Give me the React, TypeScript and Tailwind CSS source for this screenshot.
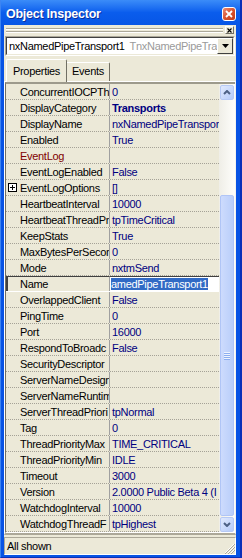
import React from 'react';

// ── Data ──────────────────────────────────────────────────────────────────

type Prop = {
  name: string;
  value?: string;
  kind?: 'bold' | 'event' | 'set' | 'edit';
};

// names are cut the way the grid column shows them
const PROPS: Prop[] = [
  { name: 'ConcurrentIOCPTh', value: '0' },
  { name: 'DisplayCategory', value: 'Transports', kind: 'bold' },
  { name: 'DisplayName', value: 'nxNamedPipeTranspor' },
  { name: 'Enabled', value: 'True' },
  { name: 'EventLog', kind: 'event' },
  { name: 'EventLogEnabled', value: 'False' },
  { name: 'EventLogOptions', value: '[]', kind: 'set' },
  { name: 'HeartbeatInterval', value: '10000' },
  { name: 'HeartbeatThreadPr', value: 'tpTimeCritical' },
  { name: 'KeepStats', value: 'True' },
  { name: 'MaxBytesPerSecor', value: '0' },
  { name: 'Mode', value: 'nxtmSend' },
  { name: 'Name', value: 'amedPipeTransport1', kind: 'edit' },
  { name: 'OverlappedClient', value: 'False' },
  { name: 'PingTime', value: '0' },
  { name: 'Port', value: '16000' },
  { name: 'RespondToBroadc', value: 'False' },
  { name: 'SecurityDescriptor' },
  { name: 'ServerNameDesign' },
  { name: 'ServerNameRuntim' },
  { name: 'ServerThreadPriori', value: 'tpNormal' },
  { name: 'Tag', value: '0' },
  { name: 'ThreadPriorityMax', value: 'TIME_CRITICAL' },
  { name: 'ThreadPriorityMin', value: 'IDLE' },
  { name: 'Timeout', value: '3000' },
  { name: 'Version', value: '2.0000 Public Beta 4 (I' },
  { name: 'WatchdogInterval', value: '10000' },
  { name: 'WatchdogThreadF', value: 'tpHighest' },
];

// ── Bits ──────────────────────────────────────────────────────────────────

function PlusBox() {
  return (
    <svg width="9" height="9" viewBox="0 0 9 9" className="shrink-0 mr-[3px]">
      <rect x="0.5" y="0.5" width="8" height="8" fill="#fff" stroke="#000" />
      <path d="M2 4.5h5M4.5 2v5" stroke="#000" />
    </svg>
  );
}

function PropRow({ p }: { p: Prop }) {
  if (p.kind === 'edit') {
    return (
      <div className="flex h-[16px] border-b border-white">
        <div className="w-[104px] shrink-0 overflow-hidden whitespace-nowrap pl-[12px] leading-[15px] border-t border-l-2 border-[#404040] border-r border-r-[#a0a0a0]">
          {p.name}
        </div>
        <div className="flex-1 overflow-hidden whitespace-nowrap bg-white border-t border-[#404040] pl-[1px] leading-[15px]">
          <span className="bg-[#316ac5] text-white">{p.value}</span>
        </div>
      </div>
    );
  }
  return (
    <div className="flex h-[16px] border-b border-dotted border-[#a5a297]">
      <div
        className={`w-[104px] shrink-0 flex items-center overflow-hidden whitespace-nowrap leading-[16px] border-r border-[#a0a0a0] ${
          p.kind === 'set' ? 'pl-[2px]' : 'pl-[14px]'
        } ${p.kind === 'event' ? 'text-[#800000]' : 'text-black'}`}
      >
        {p.kind === 'set' && <PlusBox />}
        <span>{p.name}</span>
      </div>
      <div
        className={`flex-1 overflow-hidden whitespace-nowrap pl-[2px] leading-[16px] text-[#000080] ${
          p.kind === 'bold' ? 'font-bold' : ''
        }`}
      >
        {p.value}
      </div>
    </div>
  );
}

function ScrollBtn({ dir }: { dir: 'up' | 'down' }) {
  return (
    <div className="h-[15px] w-[14px] ml-[1px] rounded-[2px] border border-[#b6c9f5] bg-gradient-to-br from-[#e1eafe] to-[#b5cbf9] flex items-center justify-center">
      <svg width="8" height="5" viewBox="0 0 8 5">
        <path
          d={dir === 'up' ? 'M1 4L4 1L7 4' : 'M1 1L4 4L7 1'}
          fill="none"
          stroke="#4d6185"
          strokeWidth="2"
        />
      </svg>
    </div>
  );
}

function ScrollBar() {
  return (
    <div className="w-[16px] shrink-0 flex flex-col bg-gradient-to-r from-[#efeee7] to-[#fefefb]">
      <div className="mt-[1px]">
        <ScrollBtn dir="up" />
      </div>
      <div className="h-[95px]" />
      <div className="h-[321px] w-[14px] ml-[1px] rounded-[2px] border border-[#b0c5f6] bg-gradient-to-r from-[#cddbfd] to-[#b9cefa] flex flex-col items-center justify-center gap-[1px]">
        {[0, 1, 2, 3].map(i => (
          <div key={i} className="h-[1px] w-[6px] bg-[#eef4fe] shadow-[0_1px_0_#8caef0]" />
        ))}
      </div>
      <div className="mt-[1px]">
        <ScrollBtn dir="down" />
      </div>
    </div>
  );
}

// ── Object Inspector ──────────────────────────────────────────────────────

export default function App() {
  return (
    <div className="w-[242px] h-[558px] flex flex-col overflow-hidden bg-[#0853e4] border-l border-l-[#3c84f2] border-r-2 border-r-[#0a2fb8] border-b border-b-[#0a2fb8] font-['Liberation_Sans',Arial,sans-serif] text-[11px] tracking-[-0.3px] text-black">
      {/* Title bar */}
      <div className="h-[25px] shrink-0 flex items-center pt-[3px] pl-[5px] pr-[4px] bg-gradient-to-b from-[#3b8cf8] via-[#0a5ded] to-[#0755e6]">
        <span className="text-white font-bold text-[12.5px] tracking-[-0.25px] [text-shadow:1px_1px_0_#0b2f9c]">
          Object Inspector
        </span>
        <div className="ml-auto h-[14px] w-[14px] rounded-[3px] border border-white bg-gradient-to-br from-[#ec8b72] via-[#d9532f] to-[#c23a16] flex items-center justify-center">
          <svg width="8" height="8" viewBox="0 0 8 8">
            <path d="M1 1L7 7M7 1L1 7" stroke="#fff" strokeWidth="1.8" />
          </svg>
        </div>
      </div>

      {/* Client area */}
      <div className="flex-1 flex flex-col ml-[3px] mr-[4px] mb-[2px] bg-[#ece9d8]">
        {/* Dock grip */}
        <div className="h-[10px] shrink-0 flex items-center pl-[2px] pr-[2px] gap-[2px]">
          <div className="flex-1 flex flex-col gap-[1px]">
            <div className="h-[2px] border-t border-[#aca899] border-b border-b-white" />
            <div className="h-[2px] border-t border-[#aca899] border-b border-b-white" />
          </div>
          <div className="h-[8px] w-[9px] border border-t-white border-l-white border-b-[#716f64] border-r-[#716f64] flex items-center justify-center">
            <svg width="5" height="5" viewBox="0 0 5 5">
              <path d="M0.5 0.5L4.5 4.5M4.5 0.5L0.5 4.5" stroke="#000" strokeWidth="1.1" />
            </svg>
          </div>
        </div>

        {/* Component selector */}
        <div className="h-[20px] shrink-0 mt-[1px] mx-[1px] border border-t-[#aca899] border-l-[#aca899] border-b-white border-r-white">
          <div className="h-full flex items-center bg-white border border-t-[#404040] border-l-[#404040] border-b-[#ece9d8] border-r-[#ece9d8]">
            <div className="flex-1 overflow-hidden whitespace-nowrap pl-[2px] leading-[16px]">
              <span className="text-black">nxNamedPipeTransport1</span>
              <span className="ml-[5px] text-[#9a9a9a]">TnxNamedPipeTra</span>
            </div>
            <div className="h-[16px] w-[16px] shrink-0 bg-[#ece9d8] border border-t-white border-l-white border-b-[#404040] border-r-[#404040] flex items-center justify-center">
              <svg width="7" height="4" viewBox="0 0 7 4">
                <path d="M0 0h7L3.5 4z" fill="#000" />
              </svg>
            </div>
          </div>
        </div>

        {/* Tabs */}
        <div className="h-[22px] shrink-0 mt-[3px] flex items-end pl-[2px]">
          <div className="relative z-10 h-[23px] -mb-px w-[61px] bg-[#ece9d8] rounded-t-[2px] border-t border-l border-white border-r border-r-[#716f64] flex items-center justify-center">
            Properties
          </div>
          <div className="h-[19px] w-[43px] rounded-tr-[2px] border-t border-white border-r border-r-[#716f64] flex items-center justify-center pb-[1px]">
            Events
          </div>
        </div>

        {/* Property grid */}
        <div className="h-[454px] shrink-0 flex flex-col border-t border-l border-white border-r border-r-[#f4f3ee] border-b-2 border-b-[#aca899]">
          <div className="h-[451px] flex border-t-2 border-t-[#9d9a8c] border-l border-l-[#716f64] border-b border-b-white">
            <div className="w-[213px] shrink-0 flex flex-col">
              {PROPS.map(p => (
                <PropRow key={p.name} p={p} />
              ))}
            </div>
            <ScrollBar />
          </div>
        </div>

        {/* Status bar */}
        <div className="h-[18px] shrink-0 mt-[2px] flex items-center border-t border-l border-[#aca899] border-b border-r border-b-white border-r-white">
          <span className="pl-[2px] leading-[16px]">All shown</span>
          <svg width="12" height="12" viewBox="0 0 12 12" className="ml-auto self-end">
            <path d="M11 2L2 11M11 5L5 11M11 8L8 11" stroke="#fff" strokeWidth="1" />
            <path d="M12 2L2 12M12 5L5 12M12 8L8 12" stroke="#aca899" strokeWidth="1" />
          </svg>
        </div>
      </div>
    </div>
  );
}
